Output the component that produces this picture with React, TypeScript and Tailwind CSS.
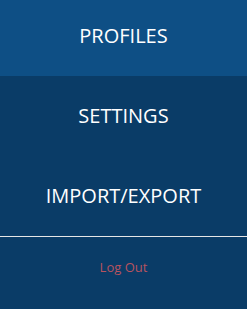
import React from 'react'

const items = [
  { label: 'PROFILES', active: true },
  { label: 'SETTINGS', active: false },
  { label: 'IMPORT/EXPORT', active: false },
]

export default function App() {
  return (
    <div className="w-[247px] h-[309px] bg-[#0a3c67] flex flex-col" style={{ fontFamily: '"Open Sans", sans-serif' }}>
      {items.map((it, i) => (
        <button
          key={it.label}
          className={`w-full flex items-center justify-center text-white text-[20px] ${
            i === 0 ? 'h-[76px] pb-[4px]' : 'h-[80px]'
          } ${it.active ? 'bg-[#0e4f85]' : ''}`}
        >
          {it.label}
        </button>
      ))}
      <div className="h-px bg-[#e6e6e6]" />
      <button className="h-[62px] w-full flex items-center justify-center text-[13px] text-[#b8535f]">
        Log Out
      </button>
    </div>
  )
}
